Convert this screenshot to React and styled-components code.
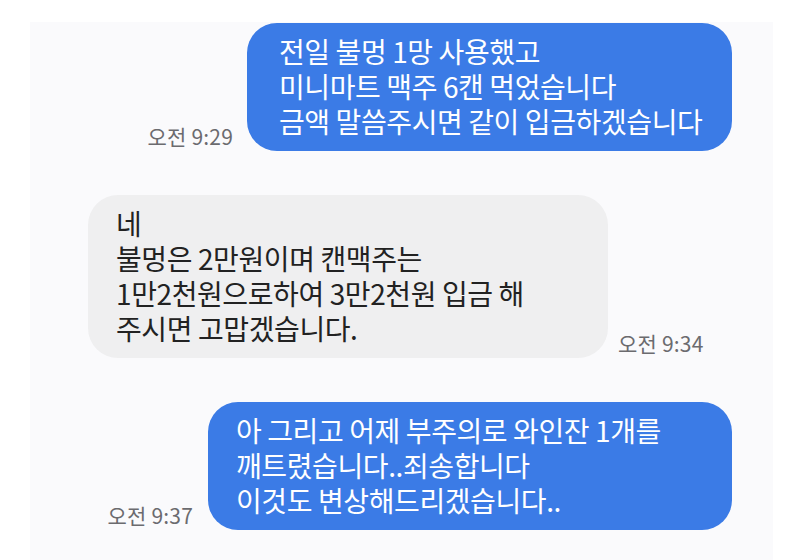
import React from 'react';
import styled, { createGlobalStyle } from 'styled-components';

const GlobalStyle = createGlobalStyle`
  html, body {
    margin: 0;
    padding: 0;
    background: #ffffff;
  }
  body {
    font-family: "Noto Sans CJK KR", "Noto Sans", sans-serif;
  }
`;

const Page = styled.div`
  width: 800px;
  height: 560px;
  overflow: hidden;
  background: #ffffff;
  padding: 22px 27px 0 30px;
  box-sizing: border-box;
`;

const Thread = styled.div`
  display: flex;
  flex-direction: column;
  gap: 44px;
  background: #fafafc;
  height: 100%;
  padding: 1px 41px 0 58px;
  box-sizing: border-box;
`;

const Row = styled.div`
  display: flex;
  align-items: flex-end;
  justify-content: ${(p) => (p.$mine ? 'flex-end' : 'flex-start')};
  gap: ${(p) => p.$gap}px;
`;

const Bubble = styled.div`
  box-sizing: border-box;
  width: ${(p) => p.$width}px;
  background: ${(p) => (p.$mine ? '#3b7be6' : '#efeff0')};
  color: ${(p) => (p.$mine ? '#ffffff' : '#222222')};
  border-radius: 30px;
  padding: 11px 20px 12px ${(p) => p.$indent}px;
  font-size: 28px;
  line-height: 35px;
  white-space: pre;
  letter-spacing: -0.4px;
`;

const Time = styled.span`
  font-size: 21px;
  line-height: 24px;
  color: #6b6b6f;
  margin-bottom: 3px;
  white-space: nowrap;
  letter-spacing: 0.2px;
`;

const messages = [
  {
    mine: true,
    time: '오전 9:29',
    width: 485,
    indent: 32,
    gap: 14,
    text: '전일 불멍 1망 사용했고\n미니마트 맥주 6캔 먹었습니다\n금액 말씀주시면 같이 입금하겠습니다',
  },
  {
    mine: false,
    time: '오전 9:34',
    width: 520,
    indent: 28,
    gap: 10,
    text: '네\n불멍은 2만원이며 캔맥주는\n1만2천원으로하여 3만2천원 입금 해\n주시면 고맙겠습니다.',
  },
  {
    mine: true,
    time: '오전 9:37',
    width: 524,
    indent: 28,
    gap: 15,
    text: '아 그리고 어제 부주의로 와인잔 1개를\n깨트렸습니다..죄송합니다\n이것도 변상해드리겠습니다..',
  },
];

export default function App() {
  return (
    <>
      <GlobalStyle />
      <Page>
        <Thread>
          {messages.map((m, i) => (
            <Row key={i} $mine={m.mine} $gap={m.gap}>
              {m.mine && <Time>{m.time}</Time>}
              <Bubble $mine={m.mine} $width={m.width} $indent={m.indent}>
                {m.text}
              </Bubble>
              {!m.mine && <Time>{m.time}</Time>}
            </Row>
          ))}
        </Thread>
      </Page>
    </>
  );
}
